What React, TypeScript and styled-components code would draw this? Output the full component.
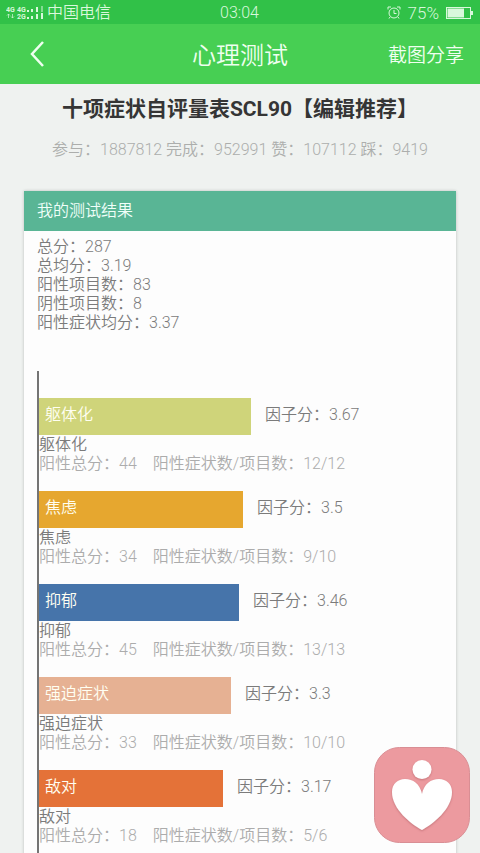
import React from "react";
import styled, { createGlobalStyle } from "styled-components";

const GlobalStyle = createGlobalStyle`
  *, *::before, *::after { box-sizing: border-box; }
  html { scrollbar-width: none; }
  html::-webkit-scrollbar { display: none; }
  body {
    margin: 0;
    background: #eff2f0;
    color: #7b7b7b;
    font-family: Roboto, "Noto Sans CJK SC", sans-serif;
    font-size: 16px;
    font-weight: 350;
    line-height: 19px;
  }
  button { font: inherit; color: inherit; background: none; border: 0; padding: 0; cursor: pointer; }
`;

const StatusBar = styled.div`
  display: grid;
  grid-template-columns: 1fr auto 1fr;
  align-items: center;
  height: 24px;
  padding: 2px 7px 0 6px;
  background: #31c148;
  color: #d9f8dc;
  line-height: 20px;
`;

const StatusGroup = styled.div<{ $end?: boolean }>`
  display: flex;
  align-items: center;
  justify-content: ${(p) => (p.$end ? "flex-end" : "flex-start")};
  gap: ${(p) => (p.$end ? "7px" : "3px")};
`;

const NavBar = styled.header`
  display: grid;
  grid-template-columns: 1fr auto 1fr;
  align-items: center;
  height: 60px;
  padding: 0 16px;
  background: #47cf53;
  color: #effff0;
`;

const BackButton = styled.button`
  display: flex;
  justify-self: start;
  padding: 0 8px;
`;

const NavTitle = styled.h1`
  margin: 4px 0 0;
  font-size: 24px;
  font-weight: 350;
  line-height: 32px;
`;

const ShareButton = styled.button`
  && { font-size: 19px; line-height: 28px; padding-top: 4px; }
  justify-self: end;
`;

const Intro = styled.section`
  padding: 12px 12px 0;
  text-align: center;
`;

const TestTitle = styled.h2`
  margin: 0;
  color: #353535;
  font-size: 21px;
  font-weight: 700;
  line-height: 26px;
`;

const Stats = styled.p`
  margin: 18px 0 0;
  color: #acaeac;
  line-height: 20px;
`;

const Card = styled.main`
  margin: 31px 24px 24px;
  background: #fdfdfd;
  box-shadow: 0 0 3px rgba(0, 0, 0, 0.22);
`;

const CardTitle = styled.h3`
  margin: 0;
  padding: 0 13px;
  background: #59b595;
  color: #f0fff9;
  font-size: 16px;
  font-weight: 350;
  line-height: 40px;
`;

const CardBody = styled.div`
  padding: 6px 17px 14px 13px;
`;

const Summary = styled.ul`
  margin: 0;
  padding: 0;
  list-style: none;
`;

const Chart = styled.ol`
  display: grid;
  gap: 18px;
  margin: 39px 0 0;
  padding: 27px 0 18px;
  border-left: 2px solid #747474;
  list-style: none;
`;

const BarLine = styled.div`
  display: flex;
  align-items: center;
  gap: 14px;
  height: 37px;
`;

const Bar = styled.div<{ $color: string }>`
  height: 100%;
  padding: 0 6px;
  background: ${(p) => p.$color};
  color: #fffff2;
  line-height: 34px;
`;

const Score = styled.span`
  padding-bottom: 4px;
`;

const Detail = styled.p`
  display: flex;
  gap: 16px;
  margin: 0;
  color: #acacac;
`;

const HeartButton = styled.button`
  position: fixed;
  right: 10px;
  bottom: 10px;
  display: flex;
  border-radius: 26px;
`;

const summary = [
  ["总分", "287"],
  ["总均分", "3.19"],
  ["阳性项目数", "83"],
  ["阴性项目数", "8"],
  ["阳性症状均分", "3.37"],
];

const factors = [
  { name: "躯体化", score: "3.67", total: 44, items: "12/12", width: 53, color: "#cfd47a" },
  { name: "焦虑", score: "3.5", total: 34, items: "9/10", width: 51, color: "#e6a72f" },
  { name: "抑郁", score: "3.46", total: 45, items: "13/13", width: 50, color: "#4674aa" },
  { name: "强迫症状", score: "3.3", total: 33, items: "10/10", width: 48, color: "#e6b193" },
  { name: "敌对", score: "3.17", total: 18, items: "5/6", width: 46, color: "#e47238" },
];

const SignalIcon = () => (
  <svg width="38" height="14" viewBox="0 0 38 14" fill="currentColor" aria-hidden="true">
    <g fontFamily="Roboto, sans-serif" fontSize="7" fontWeight="700">
      <text x="0" y="6">4G</text>
      <text x="11" y="6">4G</text>
      <text x="11" y="13">2G</text>
    </g>
    <path d="M2.500 12V8M1 9.500L2.500 8L4 9.500M6.500 8v4M5 10.500L6.500 12L8 10.500" fill="none" stroke="currentColor" strokeWidth=".7" />
    <path d="M21 4h2v2h-2zM25 3h2v3h-2zM30 1h2v5h-2zM21 11h2v2h-2zM25 10h2v3h-2zM30 8h2v5h-2zM35 7h2v6h-2z" />
    <path d="M35 0h2v6h-2z" opacity=".5" />
  </svg>
);

const AlarmIcon = () => (
  <svg width="14" height="14" viewBox="0 0 14 14" fill="none" stroke="currentColor" aria-hidden="true">
    <circle cx="7" cy="7" r="5" />
    <path d="M7 4V7.500H9.500M1 3.500V1H4M10 1H13V3.500M3 11L2 12.500M11 11L12 12.500" />
  </svg>
);

const BatteryIcon = () => (
  <svg width="27" height="12" viewBox="0 0 27 12" aria-hidden="true">
    <rect x=".5" y=".5" width="24" height="11" fill="none" stroke="currentColor" />
    <path d="M1.500 1.500H18V10.500H1.500zM25 4H27V8H25z" fill="currentColor" />
  </svg>
);

const Percent = styled.span`
  font-size: 17px;
`;

const HeartIcon = () => (
  <svg width="96" height="96" viewBox="0 0 96 96" aria-hidden="true">
    <defs>
      <filter id="shade" x="-10%" y="-10%" width="120%" height="120%">
        <feDropShadow dx="0" dy="1" stdDeviation="1" floodColor="#a3525a" floodOpacity=".55" />
      </filter>
    </defs>
    <rect x=".5" y=".5" width="95" height="95" rx="25" fill="#ec9a9f" stroke="#d98e94" />
    <g fill="#fff" filter="url(#shade)">
      <circle cx="48" cy="22.500" r="9.500" />
      <path d="M48 83C37 77 18 62 18 45C18 37 24 32 31 32C39 32 46 37 48 47C50 37 57 32 65 32C72 32 78 37 78 45C78 62 59 77 48 83Z" />
    </g>
  </svg>
);

export default function App() {
  return (
    <>
      <GlobalStyle />
      <StatusBar>
        <StatusGroup>
          <SignalIcon />
          <span>中国电信</span>
        </StatusGroup>
        <span>03:04</span>
        <StatusGroup $end>
          <AlarmIcon />
          <Percent>75%</Percent>
          <BatteryIcon />
        </StatusGroup>
      </StatusBar>
      <NavBar>
        <BackButton aria-label="返回">
          <svg width="26" height="28" viewBox="0 0 26 28" fill="none" stroke="currentColor" strokeWidth="2.500" aria-hidden="true">
            <path d="M19 2L8 14L19 26" />
          </svg>
        </BackButton>
        <NavTitle>心理测试</NavTitle>
        <ShareButton>截图分享</ShareButton>
      </NavBar>
      <Intro>
        <TestTitle>十项症状自评量表SCL90【编辑推荐】</TestTitle>
        <Stats>参与：1887812 完成：952991 赞：107112 踩：9419</Stats>
      </Intro>
      <Card>
        <CardTitle>我的测试结果</CardTitle>
        <CardBody>
          <Summary>
            {summary.map(([label, value]) => (
              <li key={label}>{label}：{value}</li>
            ))}
          </Summary>
          <Chart>
            {factors.map((f) => (
              <li key={f.name}>
                <BarLine>
                  <Bar $color={f.color} style={{ width: `${f.width}%` }}>{f.name}</Bar>
                  <Score>因子分：{f.score}</Score>
                </BarLine>
                <div>{f.name}</div>
                <Detail>
                  <span>阳性总分：{f.total}</span>
                  <span>阳性症状数/项目数：{f.items}</span>
                </Detail>
              </li>
            ))}
          </Chart>
        </CardBody>
      </Card>
      <HeartButton aria-label="心理测试">
        <HeartIcon />
      </HeartButton>
    </>
  );
}
